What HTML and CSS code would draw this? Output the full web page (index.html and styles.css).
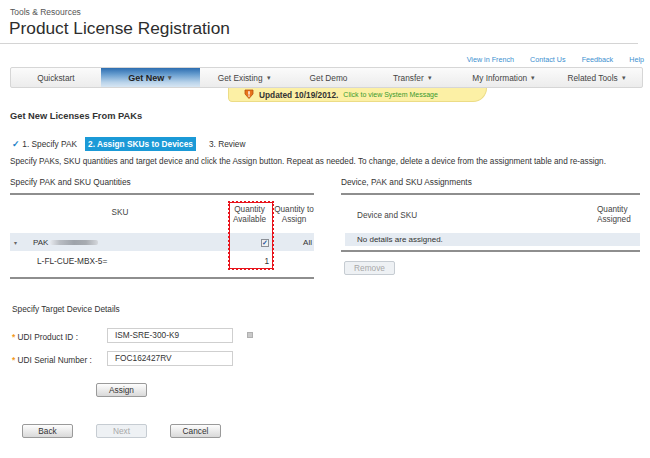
FILE: index.html
```html
<!DOCTYPE html>
<html>
<head>
<meta charset="utf-8">
<link rel="stylesheet" href="styles.css">
</head>
<body>
<div class="page">
  <header class="masthead">
    <div class="crumb">Tools &amp; Resources</div>
    <h1 class="title">Product License Registration</h1>
  </header>
  <div class="utility">
    <a>View in French</a><a>Contact Us</a><a>Feedback</a><a>Help</a>
  </div>
  <nav class="nav">
    <div class="nav-item w1">Quickstart</div>
    <div class="nav-item active w2">Get New <span class="caret">▾</span></div>
    <div class="nav-item w3">Get Existing <span class="caret">▾</span></div>
    <div class="nav-item w4">Get Demo</div>
    <div class="nav-item w5">Transfer <span class="caret">▾</span></div>
    <div class="nav-item w6">My Information <span class="caret">▾</span></div>
    <div class="nav-item w7">Related Tools <span class="caret">▾</span></div>
  </nav>
  <div class="banner">
    <svg class="alert" width="10" height="10" viewBox="0 0 10 10"><path d="M1 1 H9 V5 L5 9.5 L1 5 Z" fill="#e8731c" stroke="#b5500c" stroke-width="0.8"/><rect x="4.3" y="2.2" width="1.4" height="3.4" fill="#fff"/><rect x="4.3" y="6.4" width="1.4" height="1.3" fill="#fff"/></svg>
    <span class="upd">Updated 10/19/2012.</span>
    <span class="msg">Click to view System Message</span>
  </div>

  <main class="content">
    <h2 class="heading">Get New Licenses From PAKs</h2>
    <div class="steps">
      <span class="step done"><span class="check">✓</span> 1. Specify PAK</span>
      <span class="step current">2. Assign SKUs to Devices</span>
      <span class="step">3. Review</span>
    </div>
    <p class="desc">Specify PAKs, SKU quantities and target device and click the Assign button. Repeat as needed. To change, delete a device from the assignment table and re-assign.</p>

    <div class="panels">
      <section class="panel left">
        <div class="panel-title">Specify PAK and SKU Quantities</div>
        <div class="table">
          <div class="redbox"></div>
          <div class="row head">
            <div class="c-sku center">SKU</div>
            <div class="c-avail center">Quantity<br>Available</div>
            <div class="c-assign nowrap">Quantity to<br>Assign</div>
          </div>
          <div class="row pak">
            <div class="c-tri">▾</div>
            <div class="c-sku2">PAK <span class="blur"></span></div>
            <div class="c-avail right"><span class="cb">✓</span></div>
            <div class="c-assign right">All</div>
          </div>
          <div class="row item">
            <div class="c-sku3">L-FL-CUE-MBX-5=</div>
            <div class="c-avail right">1</div>
            <div class="c-assign"></div>
          </div>
        </div>
      </section>
      <section class="panel right-panel">
        <div class="panel-title">Device, PAK and SKU Assignments</div>
        <div class="rtable">
          <div class="rrow head">
            <div class="r-dev">Device and SKU</div>
            <div class="r-qty">Quantity<br>Assigned</div>
          </div>
          <div class="rrow empty">No details are assigned.</div>
        </div>
        <button class="btn disabled remove">Remove</button>
      </section>
    </div>

    <div class="target">
      <div class="target-title">Specify Target Device Details</div>
      <div class="field">
        <label><span class="req">*</span> UDI Product ID :</label>
        <div class="input">ISM-SRE-300-K9</div>
        <span class="lookup"></span>
      </div>
      <div class="field">
        <label><span class="req">*</span> UDI Serial Number :</label>
        <div class="input">FOC162427RV</div>
      </div>
      <div class="assign-row"><button class="btn">Assign</button></div>
    </div>

    <div class="actions">
      <button class="btn">Back</button>
      <button class="btn disabled">Next</button>
      <button class="btn">Cancel</button>
    </div>
  </main>
</div>
</body>
</html>
```

FILE: styles.css
```css
* { box-sizing: border-box; }
html, body { margin: 0; padding: 0; background: #fff; }
body {
  font-family: "Liberation Sans", Arial, sans-serif;
  color: #333;
  font-size: 8.5px;
  width: 650px;
  height: 458px;
  overflow: hidden;
}
.page { width: 650px; }

.masthead {
  padding: 7px 0 0 9px;
  height: 44px;
  border-bottom: 1px solid #d4d4d4;
  width: 638px;
}
.crumb { font-size: 8.5px; color: #555; line-height: 10px; padding-left: 1px; }
.title {
  margin: 0;
  font-weight: normal;
  font-size: 17.3px;
  line-height: 22px;
  color: #2d2d2d;
}

.utility {
  display: flex;
  justify-content: flex-end;
  gap: 16px;
  padding: 11px 6px 0 0;
  height: 23px;
  font-size: 7.2px;
  line-height: 9px;
}
.utility a { color: #3c8fcf; }

.nav {
  display: flex;
  margin-left: 10px;
  width: 633px;
  height: 21px;
  border: 1px solid #d6d6d6;
  border-radius: 2px;
  background: linear-gradient(#fbfbfb, #ececec);
  align-items: stretch;
}
.nav-item {
  display: flex;
  align-items: center;
  justify-content: center;
  font-size: 8.3px;
  color: #444;
  gap: 4px;
}
.caret { font-size: 7px; color: #555; }
.w1 { width: 90px; }
.w2 { width: 99px; }
.w3 { width: 89px; }
.w4 { width: 80px; }
.w5 { width: 88px; }
.w6 { width: 95px; }
.w7 { width: 91px; }
.nav-item.active {
  background: linear-gradient(#2c6db0 0%, #6a9fd0 35%, #b9d3ea 75%, #d7e6f3 100%);
  color: #222;
  font-weight: bold;
  font-size: 9px;
}

.banner {
  margin-left: 228px;
  width: 259px;
  height: 14px;
  background: #fcf0a5;
  border: 1px solid #ecdc86;
  border-top: none;
  border-radius: 0 0 40px 12px;
  display: flex;
  align-items: center;
  padding-left: 15px;
  gap: 5px;
}
.alert { flex: none; margin-top: -2px; }
.upd { font-weight: bold; font-size: 8.3px; color: #333; }
.msg { color: #3b9a2e; font-size: 7px; }

.content { padding: 0 10px; }
.heading {
  margin: 8px 0 0 0;
  font-size: 9.3px;
  line-height: 12px;
  font-weight: bold;
  color: #333;
}
.steps {
  display: flex;
  align-items: center;
  margin-top: 15px;
  height: 14px;
  font-size: 8.3px;
}
.step { color: #333; }
.step.done { padding-left: 2px; width: 75px; }
.check { color: #1b7fc8; font-weight: bold; font-size: 9px; }
.step.current {
  background: #1b9ad7;
  color: #fff;
  font-weight: bold;
  height: 14px;
  line-height: 14px;
  width: 111px;
  text-align: center;
  margin-right: 13px;
}
.desc {
  margin: 5px 0 0 0;
  font-size: 8.2px;
  line-height: 12px;
  color: #333;
}

.panels {
  display: flex;
  gap: 27px;
  margin-top: 9px;
}
.panel { display: flex; flex-direction: column; }
.panel.left { width: 304px; }
.panel.right-panel { width: 302px; }
.panel-title {
  font-size: 8.3px;
  line-height: 11px;
  color: #333;
  padding-bottom: 5px;
  border-bottom: 2px solid #8e8e8e;
}

.table {
  position: relative;
  border-bottom: 2px solid #8e8e8e;
  padding-top: 10px;
  padding-bottom: 6px;
}
.redbox {
  position: absolute;
  left: 218px;
  top: 6px;
  width: 46px;
  height: 69px;
  border: 2px dotted #e8141c;
  outline: 1px solid #e8141c;
  outline-offset: -2px;
}
.row { display: flex; align-items: center; }
.row.head { height: 20px; font-size: 8.2px; line-height: 10px; color: #444; }
.c-sku { width: 220px; padding-bottom: 4px; }
.c-avail { width: 44px; padding-right: 5px; }
.c-assign { width: 40px; padding-right: 2px; }
.nowrap { white-space: nowrap; text-align: center; padding-right: 0; margin-right: -2px; }
.center { text-align: center; }
.right { text-align: right; }
.row.pak {
  margin-top: 8px;
  height: 18px;
  background: #e5ebf2;
  font-size: 8px;
}
.c-tri { width: 23px; padding-left: 4px; font-size: 6px; color: #666; }
.c-sku2 { width: 197px; display: flex; align-items: center; gap: 2px; }
.blur {
  display: inline-block;
  width: 48px;
  height: 5px;
  border-radius: 2px;
  background: linear-gradient(90deg, #e6e9ee 0%, #b9bdc3 20%, #9ea3aa 50%, #a7abb1 75%, #d4d7dc 100%);
}
.cb {
  display: inline-block;
  width: 8px;
  height: 8px;
  border: 1px solid #8b8f96;
  background: #f0f0f0;
  color: #2a5aa0;
  font-size: 7px;
  line-height: 6px;
  text-align: center;
  font-weight: bold;
}
.row.item { height: 20px; font-size: 8.3px; }
.c-sku3 { width: 220px; padding-left: 27px; }

.rtable { border-bottom: 2px solid #8e8e8e; padding-bottom: 4px; }
.rrow.head {
  display: flex;
  align-items: center;
  justify-content: space-between;
  height: 20px;
  margin-top: 10px;
  font-size: 8.2px;
  line-height: 10px;
  color: #444;
}
.r-dev { padding-left: 16px; padding-top: 2px; }
.r-qty { width: 43px; }
.rrow.empty {
  margin-top: 8px;
  margin-left: 4px;
  height: 13px;
  line-height: 13px;
  background: #e5ebf2;
  padding-left: 12px;
  font-size: 8px;
}

.btn {
  font-family: "Liberation Sans", Arial, sans-serif;
  font-size: 8.3px;
  color: #333;
  width: 51px;
  height: 14px;
  padding: 0;
  border: 1px solid #9a9a9a;
  border-radius: 2px;
  background: linear-gradient(#fdfdfd, #d9d9d9);
  line-height: 12px;
}
.btn.disabled {
  color: #a8a8a8;
  border-color: #c6ccd2;
  background: #eef1f4;
}
.remove { margin-top: 9px; margin-left: 3px; }

.target { margin-top: 25px; padding-left: 2px; }
.target-title { font-size: 8.3px; line-height: 11px; }
.field {
  display: flex;
  align-items: center;
  height: 16px;
}
.target-title + .field { margin-top: 12px; }
.field + .field { margin-top: 7px; }
.field label { width: 95px; font-size: 8.3px; color: #333; padding-top: 3px; }
.req { color: #f39a1e; font-weight: bold; }
.input {
  width: 126px;
  height: 15px;
  border: 1px solid #cfcfcf;
  padding-left: 7px;
  font-size: 8.3px;
  line-height: 13px;
  color: #333;
}
.lookup {
  display: inline-block;
  width: 6px;
  height: 6px;
  margin-left: 14px;
  background: #c9c9c9;
  border: 1px solid #b0b0b0;
}
.assign-row { padding-left: 84px; margin-top: 17px; }

.actions {
  display: flex;
  gap: 23px;
  margin-top: 27px;
  padding-left: 12px;
}
```
